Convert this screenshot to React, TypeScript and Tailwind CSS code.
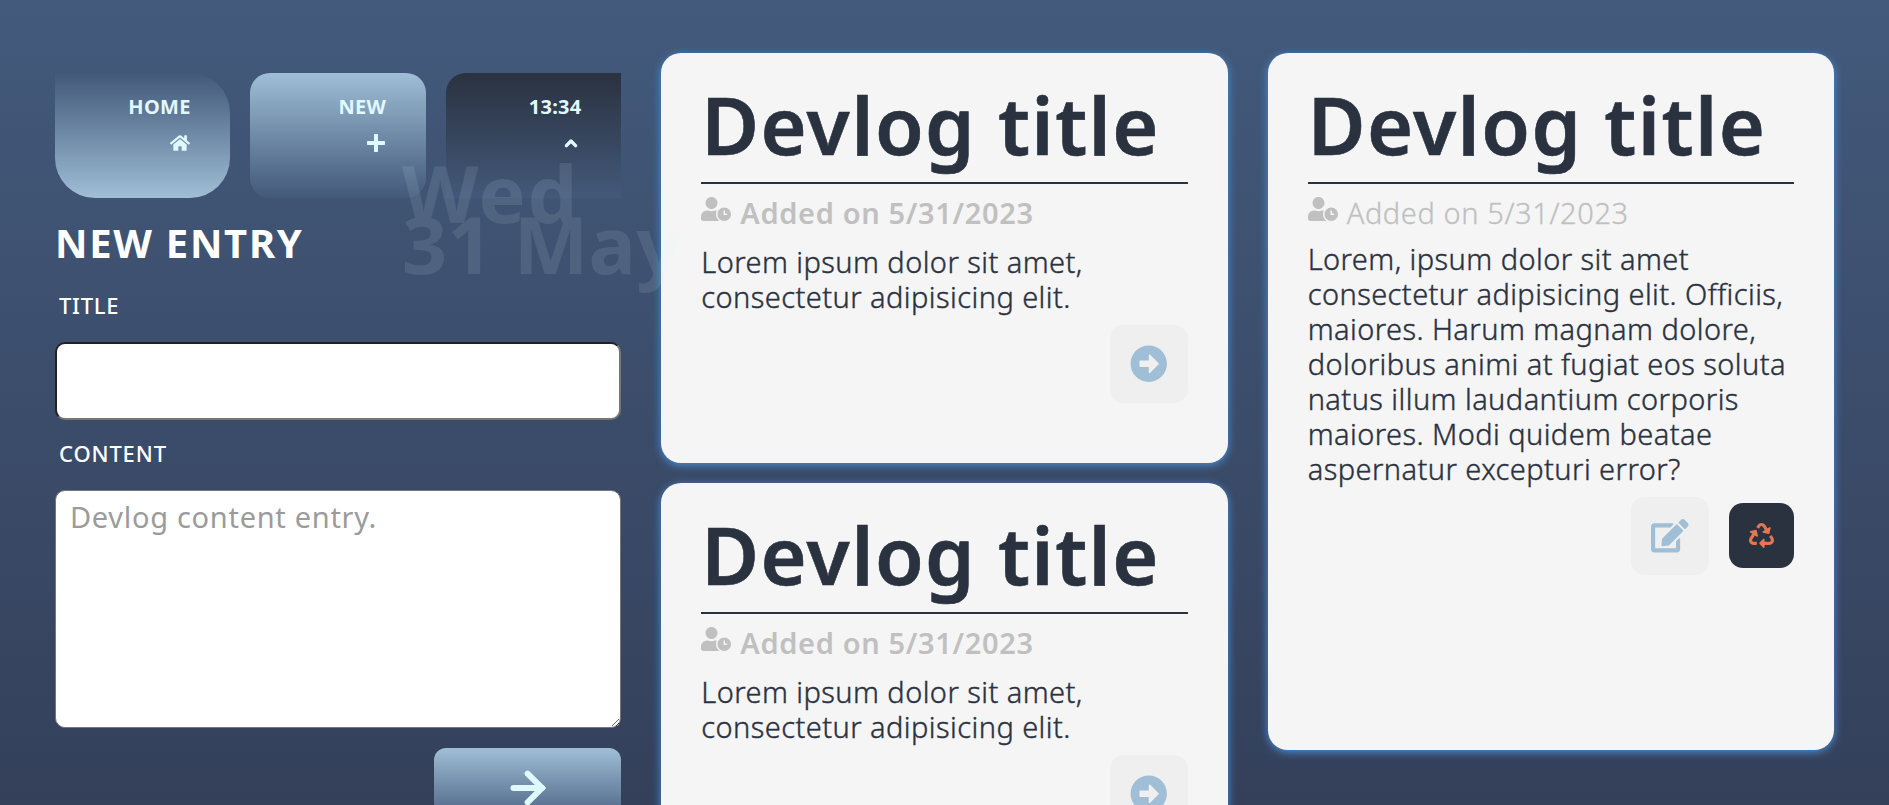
import React, { type ReactNode } from "react";
import { FaArrowAltCircleRight, FaEdit, FaHome, FaRecycle, FaUserClock } from "react-icons/fa";

function PlusIcon() {
  return (
    <svg width="19" height="20" viewBox="0 0 19 20" fill="currentColor">
      <rect x="0" y="8" width="18" height="4" rx="0.8" />
      <rect x="7" y="1" width="4" height="18" rx="0.8" />
    </svg>
  );
}

function ChevronUpIcon() {
  return (
    <svg width="20" height="20" viewBox="0 0 20 20" fill="none" stroke="currentColor" strokeWidth="3.4" strokeLinecap="round" strokeLinejoin="round">
      <path d="M5.4 12.6 10 8l4.6 4.6" />
    </svg>
  );
}

function ArrowIcon() {
  return (
    <svg width="38" height="38" viewBox="0 0 38 38" fill="none" stroke="currentColor" strokeWidth="6">
      <path d="M18.6 4.6 33 19 18.6 33.4" strokeLinecap="round" strokeLinejoin="miter" />
      <path d="M4.5 19H33" strokeLinecap="round" />
    </svg>
  );
}

function NavTile({ label, className, children }: { label: string; className: string; children: ReactNode }) {
  return (
    <a className={`flex h-[125px] flex-col items-end gap-[14px] pt-[22px] pr-10 text-[20px] leading-6 font-bold ${className}`}>
      <span className="-mr-[0.3px] tracking-[0.3px]">{label}</span>
      {children}
    </a>
  );
}

interface PostProps {
  className: string;
  metaClass: string;
  bodyClass: string;
  lines: string[];
  children: ReactNode;
}

function Post({ className, metaClass, bodyClass, lines, children }: PostProps) {
  return (
    <article className={`rounded-[20px] bg-[#f5f5f5] px-10 pt-[30px] text-[#2a3240] shadow-[0_2px_8px_#4a90d9] ${className}`}>
      <h2 className="h-[101px] border-b-2 border-[#2a3240] text-[79px] leading-[83px] font-semibold tracking-[1.4px] whitespace-nowrap [-webkit-text-stroke:0.6px_#2a3240]">
        Devlog title
      </h2>
      <div className="flex h-[50px] gap-[9px] pt-[11px] text-[#c0c0c0]">
        <FaUserClock size={30} className="-mt-px" />
        <span className={`text-[29px] leading-9 whitespace-nowrap ${metaClass}`}>Added on 5/31/2023</span>
      </div>
      <p className={`text-[29px] leading-[35px] font-light tracking-[0.43px] whitespace-nowrap [-webkit-text-stroke:0.4px_#2a3240] ${bodyClass}`}>
        {lines.map((line) => (
          <span key={line} className="block">{line}</span>
        ))}
      </p>
      <div className="mt-[11px] flex items-start justify-end gap-5">{children}</div>
    </article>
  );
}

function ShortPost() {
  return (
    <Post
      className="h-[410px] shrink-0"
      metaClass="font-semibold tracking-[0.65px]"
      bodyClass="mt-[10px]"
      lines={["Lorem ipsum dolor sit amet,", "consectetur adipisicing elit."]}
    >
      <button className="rounded-[14px] bg-[#efefef] p-5 text-[#a0bfd6]">
        <FaArrowAltCircleRight size={37.5} />
      </button>
    </Post>
  );
}

export default function App() {
  return (
    <main className="relative grid h-[805px] grid-cols-3 gap-10 overflow-hidden bg-linear-to-b from-[#435a7c] to-[#34405a] px-[55px] pt-[53px] font-['Noto_Sans',sans-serif]">
      <section className="flex flex-col pt-5">
        <nav className="grid grid-cols-3 gap-5 text-[#e0f8ff]">
          <NavTile label="HOME" className="rounded-tr-[40px] rounded-b-[40px] bg-linear-to-b from-[#43597a] to-[#a0bfd6]">
            <FaHome size={20} />
          </NavTile>
          <NavTile label="NEW" className="rounded-[20px] bg-linear-to-b from-[#a0bfd6] to-[#43597a]">
            <PlusIcon />
          </NavTile>
          <NavTile label="13:34" className="rounded-tl-[20px] bg-linear-to-b from-[#2a3240] to-[#43597a]">
            <ChevronUpIcon />
          </NavTile>
        </nav>
        <h1 className="mt-5 h-[50px] text-[40px] leading-[50px] font-bold tracking-[1.7px] text-white">NEW ENTRY</h1>
        <label className="mt-[22px] h-[30px] pl-1 text-[22px] leading-[30px] font-medium tracking-[0.75px] text-white">TITLE</label>
        <input className="mt-[22px] h-[78px] shrink-0 rounded-[10px] border-2 border-t-[#222] border-r-[#767676] border-b-[#767676] border-l-[#222] bg-white px-4 text-[29px] outline-none" />
        <label className="mt-[18px] h-[30px] pl-1 text-[22px] leading-[30px] font-medium tracking-[0.85px] text-white">CONTENT</label>
        <textarea
          className="mt-[22px] h-[238px] shrink-0 resize rounded-[10px] border border-[#767676] bg-white px-[14px] pt-[8px] text-[29px] leading-9 tracking-[0.7px] outline-none placeholder:text-[#9b9b9b]"
          placeholder="Devlog content entry."
        />
        <button className="mt-5 flex h-20 w-[187px] shrink-0 items-center justify-center self-end rounded-[12px] bg-linear-to-b from-[#a0bfd6] to-[#43597a] text-[#e0f8ff]">
          <ArrowIcon />
        </button>
      </section>

      <section className="flex flex-col gap-5">
        <ShortPost />
        <ShortPost />
      </section>

      <Post
        className="h-[697px]"
        metaClass="font-light tracking-[0.6px] [-webkit-text-stroke:0.3px_#c0c0c0]"
        bodyClass="mt-[7px]"
        lines={[
          "Lorem, ipsum dolor sit amet",
          "consectetur adipisicing elit. Officiis,",
          "maiores. Harum magnam dolore,",
          "doloribus animi at fugiat eos soluta",
          "natus illum laudantium corporis",
          "maiores. Modi quidem beatae",
          "aspernatur excepturi error?",
        ]}
      >
        <button className="rounded-[14px] bg-[#efefef] p-5 text-[#a0bfd6]">
          <FaEdit size={37.5} />
        </button>
        <button className="mt-[6px] rounded-[14px] bg-[#2a3240] p-5 text-[#e07856]">
          <FaRecycle size={25} />
        </button>
      </Post>

      <div className="pointer-events-none absolute top-[168px] left-[402px] text-[79px] leading-[50.5px] font-bold tracking-[1.8px] whitespace-nowrap text-[#e0f8ff] opacity-10">
        <div>Wed</div>
        <div className="tracking-[0.3px]">31 May</div>
      </div>
    </main>
  );
}
